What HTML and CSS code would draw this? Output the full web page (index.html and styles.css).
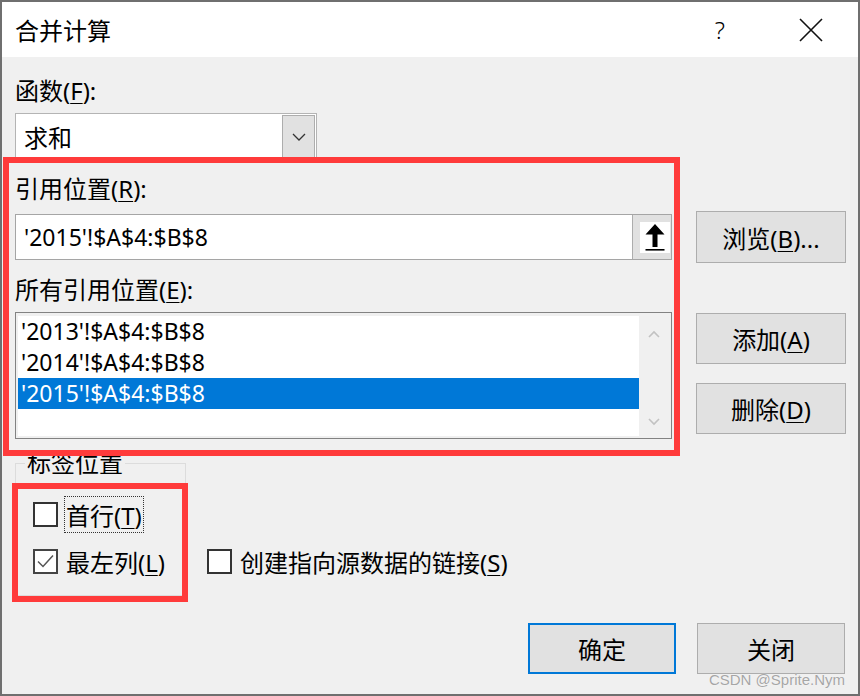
FILE: index.html
```html
<!DOCTYPE html>
<html lang="zh-CN">
<head>
    <meta charset="UTF-8">
    <meta name="viewport" content="width=device-width, initial-scale=1.0">
    <title>合并计算</title>
    <link rel="stylesheet" href="styles.css">
</head>
<body>
    <div class="dialog">
        <div class="titlebar">
            <span class="title">合并计算</span>
            <span class="help">?</span>
            <span class="close">
                <svg width="24" height="24" viewBox="0 0 24 24"><path d="M1 1L23 23M23 1L1 23" stroke="#111" stroke-width="1.6" fill="none"/></svg>
            </span>
        </div>

        <div class="content">
            <div class="label">函数(<u>F</u>):</div>
            <div class="combo">
                <span class="combo-text">求和</span>
                <span class="combo-btn">
                    <svg width="14" height="8" viewBox="0 0 14 8"><path d="M1 1L7 7L13 1" stroke="#333" stroke-width="1.3" fill="none"/></svg>
                </span>
            </div>

            <div class="ref-grid">
                <div class="label ref-label">引用位置(<u>R</u>):</div>
                <div class="ref-input">
                    <span class="ref-text">'2015'!$A$4:$B$8</span>
                    <span class="collapse-btn">
                        <span class="collapse-icon">
                            <svg width="22" height="28" viewBox="0 0 22 28"><path d="M11 1L1.5 11.5H8.5V24H13.5V11.5H20.5Z" fill="#000"/><rect x="1.5" y="26" width="19" height="1.6" fill="#000"/></svg>
                        </span>
                    </span>
                </div>
                <button class="btn browse-btn">浏览(<u>B</u>)...</button>

                <div class="label list-label">所有引用位置(<u>E</u>):</div>
                <div class="listbox">
                    <div class="list-items">
                        <div class="list-item">'2013'!$A$4:$B$8</div>
                        <div class="list-item">'2014'!$A$4:$B$8</div>
                        <div class="list-item selected">'2015'!$A$4:$B$8</div>
                    </div>
                    <div class="scrollbar">
                        <svg width="12" height="8" viewBox="0 0 12 8"><path d="M1 7L6 2L11 7" stroke="#c2c2c2" stroke-width="1.6" fill="none"/></svg>
                        <svg width="12" height="8" viewBox="0 0 12 8"><path d="M1 1L6 6L11 1" stroke="#c2c2c2" stroke-width="1.6" fill="none"/></svg>
                    </div>
                </div>
                <div class="side-buttons">
                    <button class="btn">添加(<u>A</u>)</button>
                    <button class="btn">删除(<u>D</u>)</button>
                </div>
            </div>

            <div class="options">
                <fieldset class="group">
                    <legend>标签位置</legend>
                    <div class="check-row">
                        <span class="checkbox"></span>
                        <span class="check-text focused">首行(<u>T</u>)</span>
                    </div>
                    <div class="check-row">
                        <span class="checkbox checked">
                            <svg width="21" height="21" viewBox="0 0 21 21"><path d="M3 10.5L8 15.5L18 4.5" stroke="#555" stroke-width="1.5" fill="none"/></svg>
                        </span>
                        <span class="check-text">最左列(<u>L</u>)</span>
                    </div>
                </fieldset>
                <div class="check-row link-row">
                    <span class="checkbox"></span>
                    <span class="check-text">创建指向源数据的链接(<u>S</u>)</span>
                </div>
            </div>

            <div class="footer">
                <button class="btn default-btn">确定</button>
                <button class="btn">关闭</button>
            </div>
        </div>

        <!-- red annotation frames drawn over the dialog -->
        <div class="mark mark-ref"></div>
        <div class="mark mark-labels"></div>
        <div class="watermark">CSDN @Sprite.Nym</div>
    </div>
</body>
</html>
```

FILE: styles.css
```css
* {
    box-sizing: border-box;
}

body {
    margin: 0;
    font-family: "Noto Sans", "Noto Sans CJK SC", sans-serif;
    color: #000;
}

.dialog {
    position: relative;
    width: 860px;
    height: 696px;
    border: 2px solid #6f6f6f;
    background-color: #f0f0f0;
    overflow: hidden;
}

u {
    text-decoration-thickness: 1px;
    text-underline-offset: 3px;
}

/* title bar */
.titlebar {
    height: 55px;
    background-color: #fff;
    display: flex;
    align-items: center;
    padding-left: 13px;
}

.title {
    font-size: 24px;
    flex: 1;
}

.help {
    font-size: 24px;
    font-weight: 300;
    margin-right: 74px;
}

.close {
    display: flex;
    margin-right: 35px;
}

/* body */
.content {
    padding: 20px 13px 0 13px;
}

.label {
    font-size: 24px;
    line-height: 28px;
    height: 28px;
}

.combo {
    margin-top: 8px;
    width: 302px;
    height: 47px;
    border: 1px solid #b4b4b4;
    background-color: #fff;
    display: flex;
    align-items: stretch;
}

.combo-text {
    flex: 1;
    font-size: 24px;
    line-height: 47px;
    padding-left: 8px;
}

.combo-btn {
    width: 33px;
    margin: 1px 1px 1px 0;
    border: 1px solid #adadad;
    background-color: #e1e1e1;
    display: flex;
    align-items: center;
    justify-content: center;
}

.ref-grid {
    display: grid;
    grid-template-columns: 657px 150px;
    column-gap: 24px;
    margin-top: 15px;
}

.ref-label {
    grid-column: 1 / 3;
}

.ref-input {
    grid-column: 1;
    margin-top: 11px;
    height: 46px;
    border: 1px solid #a5a5a5;
    background-color: #fff;
    display: flex;
}

.ref-text {
    flex: 1;
    font-size: 23px;
    line-height: 44px;
    padding-left: 8px;
}

.collapse-btn {
    width: 39px;
    border-left: 1px solid #adadad;
    background-color: #e1e1e1;
    display: flex;
    align-items: center;
    justify-content: center;
    padding-left: 6px;
}

.collapse-icon {
    width: 30px;
    height: 31px;
    background-color: #fff;
    display: flex;
    align-items: center;
    justify-content: center;
}

.btn {
    font-family: "Noto Sans", "Noto Sans CJK SC", sans-serif;
    font-size: 24px;
    color: #000;
    background-color: #e1e1e1;
    border: 1px solid #adadad;
    padding: 0;
    height: 51px;
    width: 150px;
}

.browse-btn {
    grid-column: 2;
    margin-top: 8px;
    height: 52px;
}

.list-label {
    grid-column: 1 / 3;
    margin-top: 13px;
}

.listbox {
    grid-column: 1;
    margin-top: 8px;
    height: 127px;
    border: 1px solid #828282;
    padding: 3px 2px 2px 2px;
    display: flex;
}

.list-items {
    flex: 1;
    background-color: #fff;
}

.list-item {
    height: 31px;
    font-size: 23px;
    line-height: 31px;
    padding-left: 3px;
}

.list-item.selected {
    background-color: #0078d7;
    color: #fff;
}

.scrollbar {
    width: 30px;
    display: flex;
    flex-direction: column;
    justify-content: space-between;
    align-items: center;
    padding: 14px 0 10px 0;
}

.side-buttons {
    grid-column: 2;
    margin-top: 9px;
    display: flex;
    flex-direction: column;
    gap: 19px;
}

/* label position group */
.options {
    display: flex;
    align-items: flex-end;
    gap: 21px;
    margin-top: 10px;
}

.group {
    width: 171px;
    margin: 0;
    border: 1px solid #dcdcdc;
    padding: 19px 0 16px 17px;
    display: flex;
    flex-direction: column;
    gap: 11px;
}

.group legend {
    font-size: 24px;
    line-height: 28px;
    padding: 0 2px;
    margin-left: -8px;
}

.check-row {
    display: flex;
    align-items: center;
    height: 36px;
    font-size: 24px;
}

.checkbox {
    width: 25px;
    height: 25px;
    border: 2px solid #333;
    background-color: #fff;
    display: flex;
    align-items: center;
    justify-content: center;
    margin-right: 6px;
}

.checkbox.checked {
    border-color: #444;
}

.check-text {
    padding: 0 1px;
    border: 1px solid transparent;
}

.check-text.focused {
    border: 1px dotted #333;
}

.link-row {
    margin-bottom: 17px;
}

.footer {
    display: flex;
    justify-content: flex-end;
    gap: 21px;
    margin-top: 27px;
}

.footer .btn {
    width: 148px;
    height: 51px;
}

.default-btn {
    border: 2px solid #0078d7;
}

/* overlays */
.mark {
    position: absolute;
    border: 6px solid #ff3b3b;
}

.mark-ref {
    left: 1px;
    top: 155px;
    width: 677px;
    height: 299px;
}

.mark-labels {
    left: 10px;
    top: 481px;
    width: 176px;
    height: 119px;
}

.watermark {
    position: absolute;
    right: 13px;
    bottom: 6px;
    font-family: "Liberation Sans", sans-serif;
    font-size: 15px;
    color: #a6a6a6;
    text-shadow: 0 0 1px #fff;
}
```
